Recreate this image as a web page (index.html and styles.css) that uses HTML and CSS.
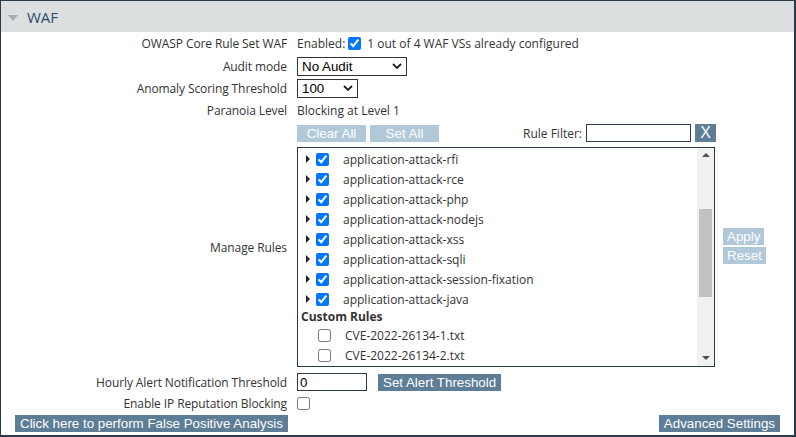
FILE: index.html
```html
<!DOCTYPE html>
<html lang="en">
<head>
    <meta charset="UTF-8">
    <title>WAF</title>
    <link rel="stylesheet" href="styles.css">
</head>
<body>
    <div class="panel">
        <div class="panel-head"><span class="caret"></span>WAF</div>

        <div class="form">
            <div class="row row-owasp">
                <div class="label">OWASP Core Rule Set WAF</div>
                <div class="value">Enabled: <input type="checkbox" class="chk enabled-chk" checked> 1 out of 4 WAF VSs already configured</div>
            </div>
            <div class="row">
                <div class="label">Audit mode</div>
                <div class="value">
                    <span class="sel-wrap">
                        <select class="sel sel-audit">
                            <option>No Audit</option>
                            <option>Audit Relevant</option>
                            <option>Audit All</option>
                        </select>
                        <svg class="chevron" width="10" height="6" viewBox="0 0 10 6"><path d="M1 1l4 4 4-4" fill="none" stroke="#222" stroke-width="1.8"/></svg>
                    </span>
                </div>
            </div>
            <div class="row">
                <div class="label">Anomaly Scoring Threshold</div>
                <div class="value">
                    <span class="sel-wrap">
                        <select class="sel sel-score">
                            <option>100</option>
                            <option>50</option>
                            <option>10</option>
                        </select>
                        <svg class="chevron" width="10" height="6" viewBox="0 0 10 6"><path d="M1 1l4 4 4-4" fill="none" stroke="#222" stroke-width="1.8"/></svg>
                    </span>
                </div>
            </div>
            <div class="row row-paranoia">
                <div class="label">Paranoia Level</div>
                <div class="value">Blocking at Level 1</div>
            </div>
            <div class="row">
                <div class="label"></div>
                <div class="value tools">
                    <button class="btn btn-light btn-wide">Clear All</button>
                    <button class="btn btn-light btn-wide">Set All</button>
                    <span class="filter-label">Rule Filter:</span>
                    <input type="text" class="txt filter-input">
                    <button class="btn btn-x">X</button>
                </div>
            </div>

            <div class="row row-rules">
                <div class="label rules-label">Manage Rules</div>
                <div class="value rules-value">
                    <div class="rules">
                        <div class="rules-list" id="rulesList"></div>
                        <div class="scrollbar">
                            <span class="arrow arrow-up"></span>
                            <span class="thumb"></span>
                            <span class="arrow arrow-down"></span>
                        </div>
                    </div>
                    <div class="rules-actions">
                        <button class="btn btn-light">Apply</button>
                        <button class="btn btn-light">Reset</button>
                    </div>
                </div>
            </div>

            <div class="row row-hourly">
                <div class="label">Hourly Alert Notification Threshold</div>
                <div class="value">
                    <input type="text" class="txt alert-input" value="0">
                    <button class="btn btn-alert">Set Alert Threshold</button>
                </div>
            </div>
            <div class="row row-ip">
                <div class="label">Enable IP Reputation Blocking</div>
                <div class="value"><input type="checkbox" class="chk"></div>
            </div>
        </div>

        <div class="footer">
            <button class="btn">Click here to perform False Positive Analysis</button>
            <button class="btn">Advanced Settings</button>
        </div>
    </div>

    <script>
        const ruleSets = [
            'application-attack-rfi',
            'application-attack-rce',
            'application-attack-php',
            'application-attack-nodejs',
            'application-attack-xss',
            'application-attack-sqli',
            'application-attack-session-fixation',
            'application-attack-java'
        ];
        const customRules = ['CVE-2022-26134-1.txt', 'CVE-2022-26134-2.txt'];

        const list = document.getElementById('rulesList');
        list.innerHTML =
            ruleSets.map(name => `
                <div class="rule">
                    <span class="expander"></span>
                    <input type="checkbox" class="chk" checked>
                    <span class="rule-name">${name}</span>
                </div>
            `).join('') +
            '<div class="custom-head">Custom Rules</div>' +
            customRules.map(name => `
                <div class="rule custom">
                    <input type="checkbox" class="chk">
                    <span class="rule-name">${name}</span>
                </div>
            `).join('');
    </script>
</body>
</html>
```

FILE: styles.css
```css
* {
    box-sizing: border-box;
    margin: 0;
    padding: 0;
}

body {
    font-family: "Open Sans", "Noto Sans", sans-serif;
    font-size: 12px;
    color: #333;
    background: #fff;
}

.panel {
    width: 796px;
    height: 437px;
    border: 1px solid #2c3b4a;
    border-right-width: 2px;
    border-bottom-width: 2px;
}

.panel-head {
    height: 31px;
    background: #dcdfe0;
    display: flex;
    align-items: center;
    font-size: 15px;
    color: #2b4a6e;
}

.caret {
    width: 0;
    height: 0;
    border-left: 5px solid transparent;
    border-right: 5px solid transparent;
    border-top: 6px solid #a9adb0;
    margin: 2px 9px 0 7px;
}

.row {
    display: flex;
    align-items: center;
    height: 22px;
}

.row-owasp,
.row-paranoia {
    height: 23px;
}

.label {
    width: 286px;
    text-align: right;
    flex-shrink: 0;
    letter-spacing: -0.1px;
}

.value {
    margin-left: 10px;
    display: flex;
    align-items: center;
}

.chk {
    width: 13px;
    height: 13px;
    margin: 0;
}

.enabled-chk {
    margin: 0 6px 0 3px;
}

.sel-wrap {
    position: relative;
    display: inline-flex;
}

.sel {
    appearance: none;
    height: 19px;
    border: 1px solid #333;
    border-radius: 0;
    background: #fff;
    color: #000;
    font-family: "Liberation Sans", Arial, sans-serif;
    font-size: 13.333px;
    padding: 0 4px;
}

.chevron {
    position: absolute;
    right: 5px;
    top: 6px;
    pointer-events: none;
}

.sel-audit {
    width: 110px;
}

.sel-score {
    width: 61px;
}

.btn {
    background: #5e7d96;
    color: #fff;
    border: none;
    font-family: "Liberation Sans", Arial, sans-serif;
    font-size: 13.333px;
    height: 17px;
    line-height: 17px;
    padding: 0 5px;
    cursor: pointer;
}

.btn-light {
    background: #b0c8d8;
}

.btn-wide {
    width: 69px;
    margin-right: 4px;
}

.tools {
    width: 419px;
}

.filter-label {
    margin-left: auto;
    margin-right: 4px;
}

.txt {
    border: 1px solid #2c3b4a;
    height: 18px;
    font-family: "Liberation Sans", Arial, sans-serif;
    font-size: 13.333px;
    padding: 0 2px;
    color: #000;
}

.filter-input {
    width: 105px;
}

.btn-x {
    width: 21px;
    height: 18px;
    margin-left: 4px;
    padding: 0;
    font-size: 16px;
    line-height: 18px;
}

.row-rules {
    height: auto;
    margin-top: 3px;
    align-items: stretch;
}

.rules-label {
    align-self: center;
    padding-bottom: 20px;
}

.rules-value {
    align-items: center;
}

.rules {
    width: 418px;
    height: 220px;
    border: 1px solid #2c3b4a;
    display: flex;
    overflow: hidden;
}

.rules-list {
    flex: 1;
    padding-top: 1px;
}

.rule {
    height: 20px;
    display: flex;
    align-items: center;
    padding-left: 8px;
}

.expander {
    width: 0;
    height: 0;
    border-top: 4px solid transparent;
    border-bottom: 4px solid transparent;
    border-left: 4px solid #222;
    margin-right: 6px;
}

.rule-name {
    margin-left: 14px;
}

.custom-head {
    height: 16px;
    line-height: 16px;
    padding-left: 3px;
    font-weight: bold;
    color: #333;
}

.rule.custom {
    padding-left: 20px;
}

.scrollbar {
    width: 17px;
    background: #f1f1f1;
    display: flex;
    flex-direction: column;
    align-items: center;
}

.arrow {
    width: 0;
    height: 0;
    border-left: 4px solid transparent;
    border-right: 4px solid transparent;
}

.arrow-up {
    border-bottom: 4px solid #505050;
    margin-top: 5px;
}

.arrow-down {
    border-top: 4px solid #505050;
    margin-top: auto;
    margin-bottom: 6px;
}

.thumb {
    width: 13px;
    height: 88px;
    background: #c1c1c1;
    margin-top: 52px;
}

.rules-actions {
    display: flex;
    flex-direction: column;
    align-items: flex-start;
    gap: 2px;
    margin-left: 8px;
    padding-bottom: 23px;
}

.rules-actions .btn {
    padding: 0 4px;
}

.row-hourly {
    margin-top: 4px;
}

.alert-input {
    width: 70px;
}

.btn-alert {
    margin-left: 11px;
}

.row-ip {
    height: 20px;
}

.footer {
    display: flex;
    justify-content: space-between;
    padding: 2px 14px 0 14px;
}
```
